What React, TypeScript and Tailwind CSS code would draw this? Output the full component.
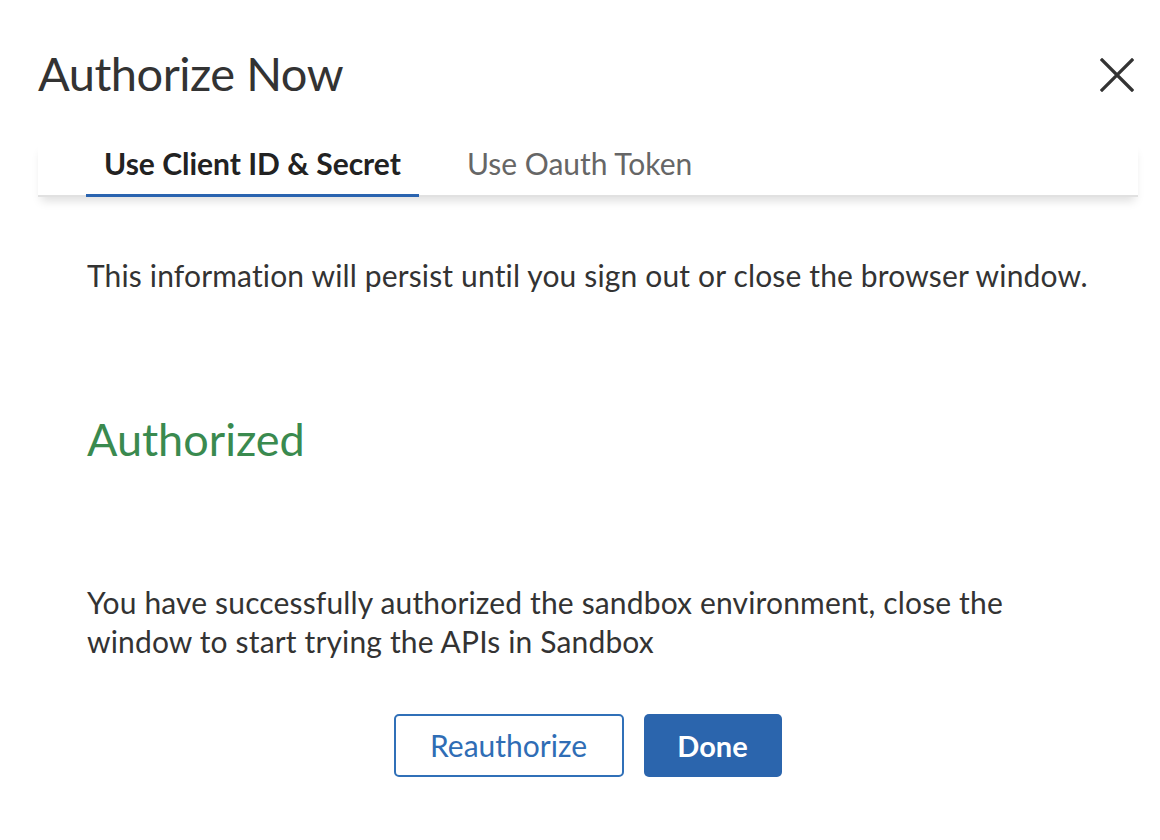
import React, { useState } from 'react';

export default function App() {
  const [tab, setTab] = useState<'client' | 'oauth'>('client');

  return (
    <div className="w-[1160px] h-[840px] bg-white px-[38px] pt-[45px] font-['Lato',sans-serif] text-[#333]">
      {/* HEADER */}
      <div className="flex items-start justify-between">
        <h1 className="text-[47px] leading-[56px] font-normal text-[#333] tracking-[-0.5px]">Authorize Now</h1>
        <button className="mt-[13px] -mr-[12px] text-[#333]" aria-label="Close">
          <svg width="34" height="34" viewBox="0 0 34 34" fill="none" stroke="currentColor" strokeWidth="3.2" strokeLinecap="square">
            <path d="M2 2 L32 32 M32 2 L2 32" />
          </svg>
        </button>
      </div>

      {/* TABS */}
      <div className="mt-[42px] -mr-[16px] border-b-2 border-[#e1e1e1] shadow-[0_7px_9px_-3px_rgba(0,0,0,0.13)]">
        <div className="flex pl-[48px]">
          <button
            onClick={() => setTab('client')}
            className={`px-[18px] pb-[11px] text-[30px] leading-[40px] -mb-[2px] border-b-[3px] ${
              tab === 'client' ? 'font-bold text-[#222] border-[#2a64b0]' : 'text-[#666] border-transparent'
            }`}
          >
            Use Client ID &amp; Secret
          </button>
          <button
            onClick={() => setTab('oauth')}
            className={`ml-[30px] px-[18px] pb-[11px] text-[30px] leading-[40px] -mb-[2px] border-b-[3px] ${
              tab === 'oauth' ? 'font-bold text-[#222] border-[#2a64b0]' : 'text-[#666] border-transparent'
            }`}
          >
            Use Oauth Token
          </button>
        </div>
      </div>

      {/* CONTENT */}
      <div className="px-[49px]">
        <p className="mt-[58px] whitespace-nowrap text-[30px] leading-[40px] tracking-[0.15px] text-[#333]">
          This information will persist until you sign out or close the browser window.
        </p>

        <h2 className="mt-[116px] text-[45px] leading-[56px] text-[#3a8a4f]">Authorized</h2>

        <p className="mt-[116px] text-[30px] leading-[39px] tracking-[0.15px] text-[#333] max-w-[960px]">
          You have successfully authorized the sandbox environment, close the window to start trying the APIs in Sandbox
        </p>

        <div className="mt-[53px] flex justify-center gap-[20px] pl-[15px]">
          <button className="w-[230px] h-[63px] rounded-[5px] border-2 border-[#3070b8] text-[30px] text-[#2f6db5]">
            Reauthorize
          </button>
          <button className="w-[138px] h-[63px] rounded-[5px] bg-[#2b65ad] text-[29px] font-bold text-white">
            Done
          </button>
        </div>
      </div>
    </div>
  );
}
